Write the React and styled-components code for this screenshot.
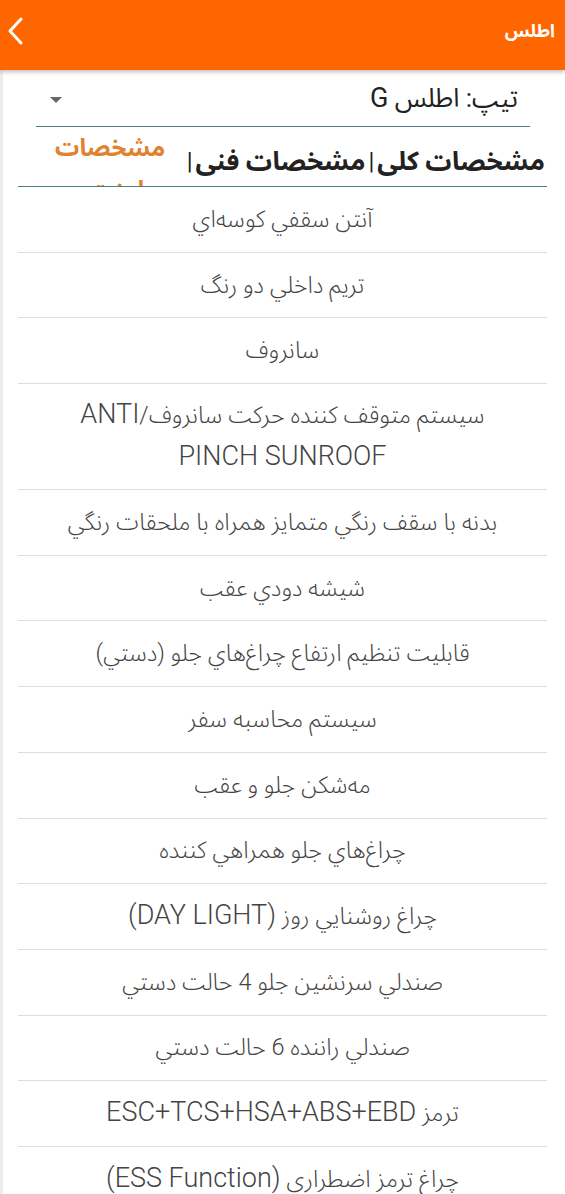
import React from 'react'
import styled, { createGlobalStyle } from 'styled-components'

const GlobalStyle = createGlobalStyle`
  body {
    margin: 0;
    background: #fff;
    font-family: Roboto, "Noto Sans Arabic", "Noto Naskh Arabic", "DejaVu Sans", sans-serif;
  }
`

const features = [
    "آنتن سقفي كوسه‌اي",
    "تريم داخلي دو رنگ",
    "سانروف",
    "سيستم متوقف كننده حركت سانروف/ANTI\nPINCH SUNROOF",
    "بدنه با سقف رنگي متمايز همراه با ملحقات رنگي",
    "شيشه دودي عقب",
    "قابليت تنظيم ارتفاع چراغ‌هاي جلو (دستي)",
    "سيستم محاسبه سفر",
    "مه‌شكن جلو و عقب",
    "چراغ‌هاي جلو همراهي كننده",
    "چراغ روشنايي روز (DAY LIGHT)",
    "صندلي سرنشين جلو 4 حالت دستي",
    "صندلي راننده 6 حالت دستي",
    "ترمز ESC+TCS+HSA+ABS+EBD",
    "چراغ ترمز اضطراري (ESS Function)",
]

// latin runs get their own span so they can be sized like the reference
const latinRe = /([A-Za-z0-9(][A-Za-z0-9+()/ ]*[A-Za-z0-9)])/

const renderText = (text) =>
    text.split(latinRe).map((part, i) =>
        i % 2 === 1 ? <Latin key={i}>{part}</Latin> : part
    )

function App() {
  return (
    <>
      <GlobalStyle />
      <Header>
        <Title>اطلس</Title>
        <BackBtn>
          <svg width="18" height="30" viewBox="0 0 18 30">
            <polyline points="15,3 4,15 15,27" fill="none" stroke="#fff" strokeWidth="3" strokeLinecap="round" strokeLinejoin="round" />
          </svg>
        </BackBtn>
      </Header>
      <Page>
        <SelectRow>
          <SelectText>تیپ: اطلس <Latin>G</Latin></SelectText>
          <Caret />
        </SelectRow>
        <Tabs>
          <Tab>مشخصات کلی</Tab>
          <Sep>|</Sep>
          <Tab>مشخصات فنی</Tab>
          <Sep>|</Sep>
          <Tab active>مشخصات امنیتی</Tab>
        </Tabs>
        <List>
          {features.map((item, i) =>
            <Row key={i}>
              <RowText>{renderText(item)}</RowText>
            </Row>
          )}
        </List>
      </Page>
    </>
  )
}

export default App

const Header = styled.div`
    height: 70px;
    background-color: #ff6600;
    display: flex;
    direction: rtl;
    justify-content: space-between;
    align-items: center;
    padding: 0 10px 8px 6px;
    box-sizing: border-box;
    box-shadow: 0 2px 4px rgba(0, 0, 0, 0.25);
    position: relative;
    z-index: 1;
`

const Title = styled.span`
    color: #fff;
    font-size: 18px;
    font-weight: 700;
`

const BackBtn = styled.div`
    display: flex;
    align-items: center;
`

const Page = styled.div`
    border-left: 3px solid #ececec;
    padding: 0 18px 0 15px;
    direction: rtl;
    min-height: 1124px;
`

const SelectRow = styled.div`
    margin: 0 17px 0 18px;
    height: 57px;
    border-bottom: 1.5px solid #4a7f88;
    display: flex;
    align-items: center;
    justify-content: space-between;
    padding: 0 12px 0 14px;
    box-sizing: border-box;
`

const SelectText = styled.span`
    font-size: 26px;
    color: #222;
`

const Latin = styled.span`
    font-family: Roboto, sans-serif;
    font-size: 27px;
    line-height: 1;
`

const Caret = styled.span`
    width: 0;
    height: 0;
    border-left: 6px solid transparent;
    border-right: 6px solid transparent;
    border-top: 6px solid #666;
    margin-top: 4px;
`

const Tabs = styled.div`
    height: 60px;
    border-bottom: 1.5px solid #4a7f88;
    display: flex;
    align-items: center;
    padding-right: 2px;
    overflow: hidden;
    box-sizing: border-box;
`

const Tab = styled.div`
    font-size: ${({ active }) => active ? '24px' : '26px'};
    font-weight: 700;
    color: ${({ active }) => active ? '#e0822f' : '#222'};
    white-space: ${({ active }) => active ? 'normal' : 'nowrap'};
    width: ${({ active }) => active ? '135px' : 'auto'};
    margin-right: ${({ active }) => active ? '6px' : '0'};
    text-align: center;
    line-height: ${({ active }) => active ? '42px' : '36px'};
    align-self: ${({ active }) => active ? 'flex-start' : 'center'};
    padding-top: ${({ active }) => active ? '0' : '8px'};
`

const Sep = styled.span`
    font-size: 24px;
    color: #222;
    padding: 8px 3px 0;
`

const List = styled.div`
    display: flex;
    flex-direction: column;
`

const Row = styled.div`
    min-height: 65.7px;
    box-sizing: border-box;
    border-bottom: 1px solid #dddddd;
    display: flex;
    align-items: center;
    justify-content: center;
    padding: 10px 8px 11px;
`

const RowText = styled.span`
    text-align: center;
    white-space: pre-line;
    font-size: 23.5px;
    font-weight: 300;
    line-height: 42px;
    color: #444;
`
